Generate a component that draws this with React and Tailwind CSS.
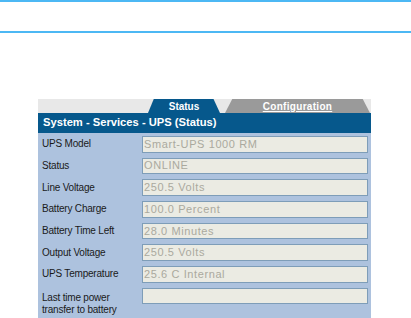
export default function App() {
  const rows = [
    ["UPS Model", "Smart-UPS 1000 RM"],
    ["Status", "ONLINE"],
    ["Line Voltage", "250.5 Volts"],
    ["Battery Charge", "100.0 Percent"],
    ["Battery Time Left", "28.0 Minutes"],
    ["Output Voltage", "250.5 Volts"],
    ["UPS Temperature", "25.6 C Internal"],
  ];
  return (
    <div className="w-[411px] h-[318px] bg-white overflow-hidden flex flex-col" style={{ fontFamily: '"Liberation Sans", Arial, sans-serif' }}>
      <div className="h-[2px] bg-[#4cb8f4] shrink-0" />
      <div className="h-[29px] shrink-0" />
      <div className="h-[2px] bg-[#4cb8f4] shrink-0" />
      <div className="ml-[38px] mt-[66px] w-[333px] flex flex-col flex-1">
        <div className="h-[14px] bg-[#e8e8e8] flex items-end shrink-0">
          <div className="ml-[110px] w-[72px] h-[14px] bg-[#06588c] [clip-path:polygon(8%_0,91%_0,100%_100%,0_100%)] flex items-center justify-center text-white text-[10px] font-bold leading-none pt-[1px]">
            Status
          </div>
          <div className="ml-[5px] w-[145px] h-[14px] bg-[#9a9a9a] [clip-path:polygon(5%_0,95%_0,100%_100%,0_100%)] flex items-center justify-center text-white text-[10px] font-bold leading-none underline tracking-[0.3px] pt-[1px]">
            Configuration
          </div>
        </div>
        <div className="h-[20px] bg-[#06588c] text-white font-bold text-[11.2px] leading-none flex items-center pl-[5px] shrink-0">
          System - Services - UPS (Status)
        </div>
        <div className="bg-[#adc2de] flex-1 pt-[3px] flex flex-col gap-y-[5.2px]">
          {rows.map(([label, value]) => (
            <div key={label} className="flex items-center h-[16.5px]">
              <div className="w-[104px] pl-[4px] text-[10px] tracking-[-0.2px] text-[#1a1a1a] leading-none">{label}</div>
              <div className="w-[226px] h-[16.5px] bg-[#ebebe3] border border-[#7e9db8] text-[11px] tracking-[0.6px] text-[#aaa99e] leading-none flex items-center pl-[1px] whitespace-nowrap">
                {value}
              </div>
            </div>
          ))}
          <div className="flex items-start">
            <div className="w-[104px] pl-[4px] text-[10px] tracking-[-0.2px] text-[#1a1a1a] leading-[12px] pt-[4px]">
              Last time power<br />transfer to battery
            </div>
            <div className="w-[226px] h-[16.5px] bg-[#ebebe3] border border-[#7e9db8]" />
          </div>
        </div>
      </div>
    </div>
  );
}
